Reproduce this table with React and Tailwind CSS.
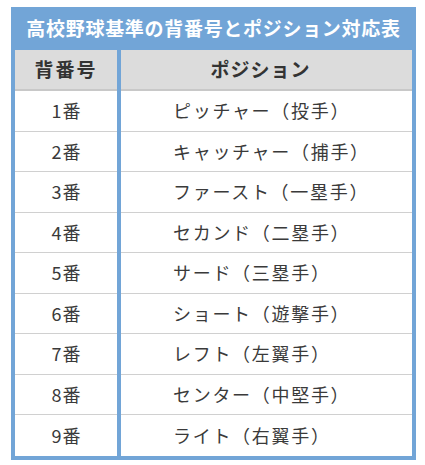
const rows = [
  ["1番", "ピッチャー（投手）"],
  ["2番", "キャッチャー（捕手）"],
  ["3番", "ファースト（一塁手）"],
  ["4番", "セカンド（二塁手）"],
  ["5番", "サード（三塁手）"],
  ["6番", "ショート（遊撃手）"],
  ["7番", "レフト（左翼手）"],
  ["8番", "センター（中堅手）"],
  ["9番", "ライト（右翼手）"],
];

export default function App() {
  return (
    <div className="w-[425px] h-[465px] bg-white pt-[7px] pl-[11px] font-['Noto_Sans_CJK_JP',sans-serif]">
      <div className="w-[405px] bg-[#72a5d7] px-[4px] pb-[4px]">
        <div className="h-[43px] flex items-center justify-center text-white font-bold text-[19px] tracking-[0.7px]">
          高校野球基準の背番号とポジション対応表
        </div>
        <div className="grid grid-cols-[102px_1fr] gap-x-[4px]">
          <div className="h-[41px] bg-[#dcdcdc] border-b-2 border-[#c8c8c8] flex items-center justify-center text-[19px] font-bold text-[#333] tracking-[2px]">
            背番号
          </div>
          <div className="h-[41px] bg-[#dcdcdc] border-b-2 border-[#c8c8c8] flex items-center justify-center text-[19px] font-bold text-[#333] tracking-[1px] pr-[12px]">
            ポジション
          </div>
          {rows.map(([num, pos], i) => (
            <div key={num} className="contents">
              <div className={"h-[40.5px] bg-white flex items-center justify-center text-[18px] text-[#3a3a3a] " + (i < rows.length - 1 ? "border-b border-[#d0d0d0]" : "")}>
                <span className="mr-[1px]">{num.slice(0, 1)}</span>
                {num.slice(1)}
              </div>
              <div className={"h-[40.5px] bg-white flex items-center pl-[52px] text-[18px] text-[#3a3a3a] tracking-[1.7px] " + (i < rows.length - 1 ? "border-b border-[#d0d0d0]" : "")}>
                {pos}
              </div>
            </div>
          ))}
        </div>
      </div>
    </div>
  );
}
